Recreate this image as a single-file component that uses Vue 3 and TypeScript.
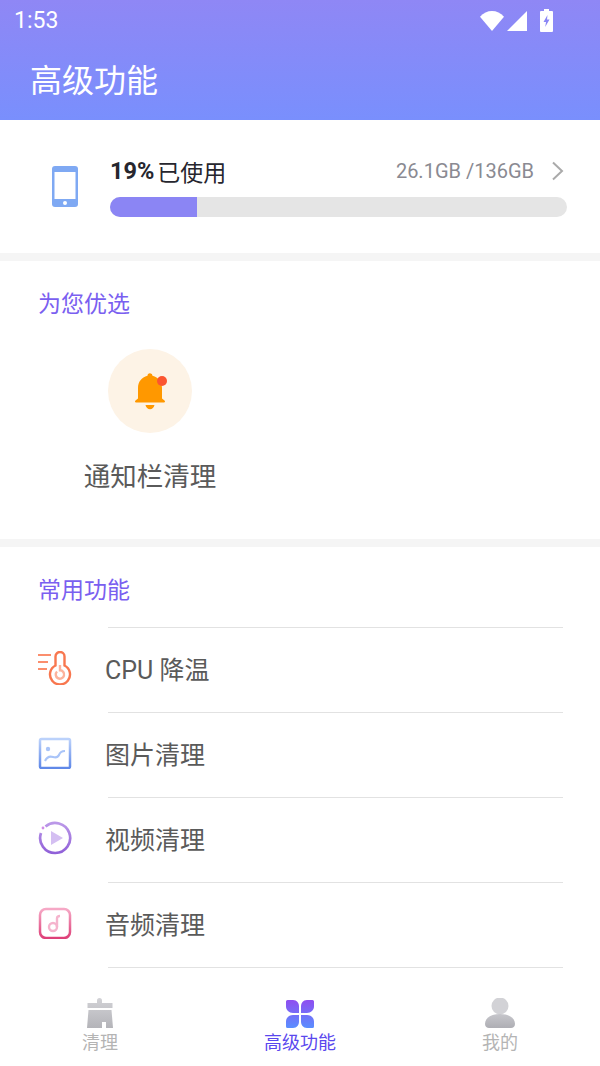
<template>
  <div class="page">
    <header class="top">
      <div class="status">
        <span class="clock">1:53</span>
        <div class="status-icons">
          <svg class="wifi" width="24" height="22" viewBox="0 0 25 22"><path d="M0 6.5C3.5 2.5 7.8.5 12.5.5S21.500 2.500 25 6.500L12.500 21.500Z" fill="#fff" /></svg>
          <svg class="signal" width="20" height="22" viewBox="0 0 21 22"><path d="M21 .5V21.500H0Z" fill="#fff" /></svg>
          <svg class="battery" width="13" height="23" viewBox="0 0 13 23">
            <path d="M4 0h5v2h3a1 1 0 0 1 1 1v19a1 1 0 0 1-1 1H1a1 1 0 0 1-1-1V3a1 1 0 0 1 1-1h3Z" fill="#fff" />
            <path d="M7.500 6 3.500 13h2.500l-.8 5 4.300-7.500H7Z" fill="#8b87f6" />
          </svg>
        </div>
      </div>
      <h1>高级功能</h1>
    </header>

    <main class="main">
      <section class="storage">
        <svg class="phone" width="26" height="41" viewBox="0 0 26 41">
          <rect width="26" height="41" rx="3" fill="#7fa9f3" />
          <rect x="2.500" y="6" width="21" height="27" fill="#fff" />
          <circle cx="13" cy="37" r="2" fill="#fff" />
        </svg>
        <div class="storage-info">
          <div class="storage-head">
            <span class="used"><b>19%</b><span>已使用</span></span>
            <span class="size">26.1GB /136GB</span>
            <svg class="chevron" width="13" height="20" viewBox="0 0 13 20"><path d="M2 1.500 11 10 2 18.500" fill="none" stroke="#aaa" stroke-width="2" /></svg>
          </div>
          <div class="bar"><div class="bar-fill" :style="{ width: usedPercent + '%' }"></div></div>
        </div>
      </section>

      <section class="picks">
        <h2>为您优选</h2>
        <div class="pick">
          <div class="pick-icon">
            <svg width="36" height="40" viewBox="0 0 36 40">
              <path d="M15.500 4.700A2.500 2.500 0 0 1 20.500 4.700C26.500 6 30 11 30 17V27.500L32.500 29.500C33.500 30.300 33 31.500 32 31.500H4C3 31.500 2.500 30.300 3.500 29.500L6 27.500V17C6 11 9.500 6 15.500 4.700Z" fill="#ff9800" />
              <path d="M13.500 34h9c-.5 2.500-2.300 4.300-4.500 4.300s-4-1.800-4.500-4.300Z" fill="#ff9800" />
              <circle cx="30" cy="10" r="5" fill="#fb5531" />
            </svg>
          </div>
          <span class="pick-name">通知栏清理</span>
        </div>
      </section>

      <section class="common">
        <h2>常用功能</h2>
        <div class="line"></div>
        <div class="row">
          <svg width="36" height="34" viewBox="0 0 36 34">
            <path d="M1 4h13M1 11h10M1 18h9" fill="none" stroke="#fb8e6d" stroke-width="2.200" />
            <path d="M18.500 14.500V5.500a4.500 4.500 0 0 1 9 0V14.500a10 10 0 1 1-9 0Z" fill="none" stroke="#f8774f" stroke-width="2.400" />
            <path d="M20 20.500a4.200 4.200 0 1 0 3-1.200V14" fill="none" stroke="#fcb39c" stroke-width="2.400" />
          </svg>
          <span>CPU 降温</span>
        </div>
        <div class="line"></div>
        <div class="row">
          <svg width="34" height="32" viewBox="0 0 34 32">
            <defs><linearGradient id="pic" x1="0" y1="0" x2="0" y2="1"><stop offset="0" stop-color="#bcd2fb" /><stop offset="1" stop-color="#5f88e8" /></linearGradient></defs>
            <rect x="2" y="2" width="30" height="29" rx="1.500" fill="none" stroke="url(#pic)" stroke-width="2.500" />
            <circle cx="10" cy="12" r="2.200" fill="#a9c4f8" />
            <path d="M7 24c2-4 5-5 8-4 3 1 5 0 6-2 1-3 3-4 6-4" fill="none" stroke="#a9c4f8" stroke-width="2.200" />
          </svg>
          <span>图片清理</span>
        </div>
        <div class="line"></div>
        <div class="row">
          <svg width="34" height="34" viewBox="0 0 34 34">
            <defs><linearGradient id="vid" x1="0" y1="0" x2="0" y2="1"><stop offset="0" stop-color="#bb98e8" /><stop offset="1" stop-color="#9060d8" /></linearGradient></defs>
            <path d="M7.500 5.500A15 15 0 1 1 3 12" fill="none" stroke="url(#vid)" stroke-width="2.700" />
            <circle cx="5" cy="7" r="1.400" fill="#d08ce8" />
            <path d="M13 10 25 17 13 24Z" fill="#d4bff2" />
          </svg>
          <span>视频清理</span>
        </div>
        <div class="line"></div>
        <div class="row">
          <svg width="34" height="32" viewBox="0 0 34 32">
            <defs><linearGradient id="mus" x1="0" y1="0" x2="0" y2="1"><stop offset="0" stop-color="#f6a9c6" /><stop offset="1" stop-color="#de3f78" /></linearGradient></defs>
            <rect x="2" y="2" width="30" height="29" rx="6" fill="none" stroke="url(#mus)" stroke-width="2.500" />
            <circle cx="15" cy="20" r="4" fill="none" stroke="#f5b4cd" stroke-width="2.400" />
            <path d="M19 20V11.500c0-2 1.500-2.500 3-2.500" fill="none" stroke="#f5b4cd" stroke-width="2.400" />
          </svg>
          <span>音频清理</span>
        </div>
        <div class="line"></div>
      </section>
    </main>

    <nav class="tabs">
      <div class="tab">
        <svg width="26" height="30" viewBox="0 0 26 30">
          <defs><linearGradient id="gray" x1="0" y1="0" x2="0" y2="1"><stop offset="0" stop-color="#d2d2d6" /><stop offset="1" stop-color="#b4b4b9" /></linearGradient></defs>
          <path d="M10 2.500a2.500 2.500 0 0 1 5 0V5H25.500V10H.5V5H10ZM1.500 12H24.500L26 30H19V24H15V30H0Z" fill="url(#gray)" />
        </svg>
        <span>清理</span>
      </div>
      <div class="tab active">
        <svg class="flower" width="28" height="28" viewBox="0 0 28 28">
          <defs><linearGradient id="flower" x1="0" y1="0" x2="0" y2="1"><stop offset="0" stop-color="#8f4df0" /><stop offset="1" stop-color="#5a8fff" /></linearGradient></defs>
          <path d="M1.500 0H7C11 0 13 3 13 6.500V13H7C3 13 0 10 0 6.500V1.500A1.500 1.500 0 0 1 1.500 0ZM26.500 0H21C17 0 15 3 15 6.500V13H21C25 13 28 10 28 6.500V1.500A1.500 1.500 0 0 0 26.500 0ZM1.500 28H7C11 28 13 25 13 21.500V15H7C3 15 0 18 0 21.500V26.500A1.500 1.500 0 0 0 1.500 28ZM26.500 28H21C17 28 15 25 15 21.500V15H21C25 15 28 18 28 21.500V26.500A1.500 1.500 0 0 1 26.500 28Z" fill="url(#flower)" />
        </svg>
        <span>高级功能</span>
      </div>
      <div class="tab">
        <svg width="30" height="30" viewBox="0 0 30 30">
          <defs><linearGradient id="person" x1="0" y1="0" x2="0" y2="1"><stop offset="0" stop-color="#c6c6cb" /><stop offset="1" stop-color="#aeaeb4" /></linearGradient></defs>
          <circle cx="15" cy="8" r="8.500" fill="#d2d2d6" />
          <path d="M0 26C0 20 6 16 15 16S30 20 30 26C30 28.500 28 30 26 30H4C2 30 0 28.500 0 26Z" fill="url(#person)" />
        </svg>
        <span>我的</span>
      </div>
    </nav>
  </div>
</template>

<script setup lang="ts">
const usedPercent = 19
</script>

<style>
html,
body {
  margin: 0;
  background: #fff;
}
</style>

<style scoped>
* {
  box-sizing: border-box;
}

.page {
  display: flex;
  flex-direction: column;
  width: 600px;
  height: 1066px;
  overflow: hidden;
  background: #fff;
  font-family: Roboto, "Noto Sans CJK SC", sans-serif;
}

.top {
  flex: none;
  height: 120px;
  color: #fff;
  background: linear-gradient(180deg, #8f87f5, #798ffd);
}

.status {
  display: flex;
  align-items: center;
  justify-content: space-between;
  height: 40px;
  padding: 1px 47px 0 14px;
}

.clock {
  font-size: 23px;
}

.status-icons {
  display: flex;
  align-items: center;
}

.signal {
  margin-left: 3px;
}

.battery {
  margin-left: 13px;
}

h1 {
  margin: 0;
  padding: 3px 0 0 30px;
  font-size: 32px;
  font-weight: 400;
  line-height: 76px;
}

.main {
  flex: 1;
  min-height: 0;
  overflow: hidden;
}

.storage {
  display: flex;
  align-items: center;
  height: 141px;
  padding: 0 33px 2px 52px;
  border-bottom: 8px solid #f5f5f5;
}

.phone {
  flex: none;
  margin: 2px 32px 0 0;
}

.storage-info {
  flex: 1;
}

.storage-head {
  display: flex;
  align-items: center;
  height: 32px;
  margin-bottom: 10px;
}

.used {
  display: flex;
  flex: 1;
  align-items: center;
  gap: 3px;
  font-size: 23px;
  color: #26262e;
}

.used b {
  font-size: 23.500px;
  font-weight: 700;
}

.size {
  font-size: 20px;
  color: #8a8a92;
}

.chevron {
  margin: 0 3px 0 17px;
}

.bar {
  height: 20px;
  overflow: hidden;
  border-radius: 10px;
  background: #e5e5e5;
}

.bar-fill {
  height: 100%;
  background: #8b85f4;
}

h2 {
  margin: 0;
  font-size: 23px;
  font-weight: 400;
  line-height: 34px;
  color: #7a5ff0;
}

.picks {
  height: 286px;
  padding: 27px 0 0 38px;
  border-bottom: 8px solid #f5f5f5;
}

.pick {
  display: flex;
  flex-direction: column;
  align-items: center;
  width: 224px;
  margin-top: 27px;
}

.pick-icon {
  display: flex;
  align-items: center;
  justify-content: center;
  width: 84px;
  height: 84px;
  border-radius: 50%;
  background: #fdf3e6;
}

.pick-name {
  margin-top: 22px;
  font-size: 26.500px;
  color: #5a5a5a;
}

.common {
  padding-top: 27px;
}

.common h2 {
  margin: 0 0 19px 38px;
}

.line {
  height: 1px;
  margin: 0 37px 0 108px;
  background: #e2e2e2;
}

.row {
  display: flex;
  align-items: center;
  height: 84px;
  padding: 0 0 4px 37px;
  font-size: 25px;
  color: #5a5a5a;
}

.row svg {
  flex: none;
  width: 36px;
  margin-right: 32px;
}

.tabs {
  display: flex;
  flex: none;
  height: 81px;
  background: #fff;
}

.tab {
  display: flex;
  flex: 1;
  flex-direction: column;
  align-items: center;
  padding-top: 13px;
  font-size: 18px;
  line-height: 26px;
  color: #b4b4b4;
}

.tab svg {
  display: block;
  margin-bottom: 2px;
}

.tab .flower {
  margin-top: 2px;
}

.tab.active {
  color: #5a48ee;
}
</style>
